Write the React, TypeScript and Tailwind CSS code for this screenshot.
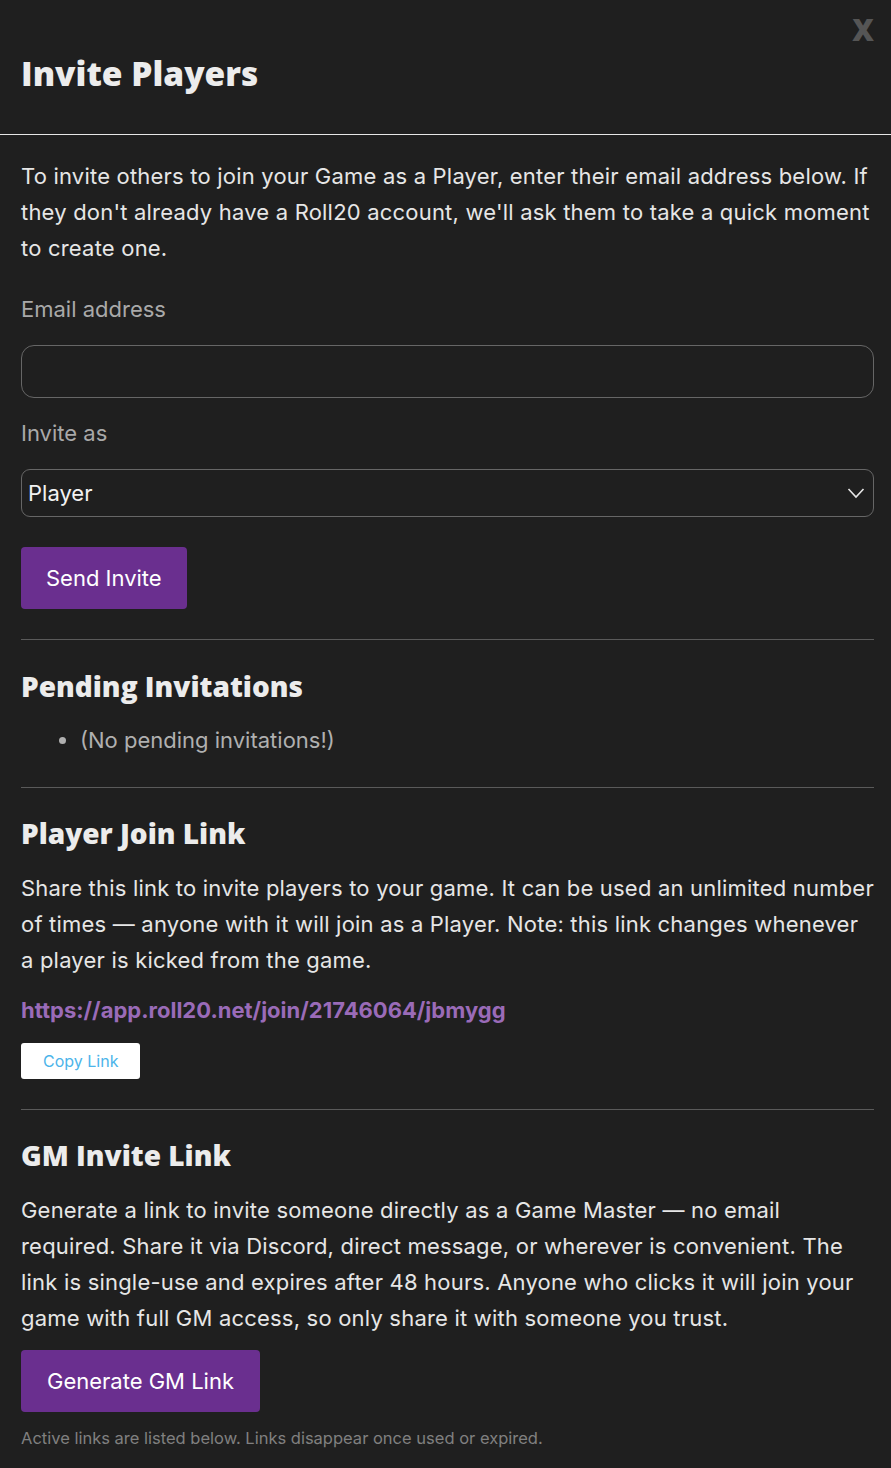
const body = { fontFamily: "Inter, 'Open Sans', sans-serif" };
const head = { fontFamily: "'Open Sans', 'Noto Sans', sans-serif" };

function Divider() {
  return <div className="h-px bg-[#5a5a5a]" />;
}

export default function App() {
  return (
    <div className="min-h-[1468px] bg-[#1f1f1f] text-[#e8e8e8]" style={body}>
      <div className="relative border-b border-[#e6e6e6] px-[21px] pt-[50px] pb-[38px]">
        <h1 className="text-[33.5px] font-extrabold leading-[46px] text-[#ececec]" style={head}>
          Invite Players
        </h1>
        <button className="absolute right-[17px] top-[12px] text-[30px] font-black leading-[36px] text-[#555]" style={head}>
          X
        </button>
      </div>

      <div className="pl-[21px] pr-[17px] pt-[23px]">
        <p className="text-[22px] leading-[36px] tracking-[0.2px] text-[#e6e6e6]">
          To invite others to join your Game as a Player, enter their email address below. If they don't already have a Roll20 account, we'll ask them to take a quick moment to create one.
        </p>

        <label className="mt-[28px] block text-[22px] leading-[30px] text-[#a9a9a9]">Email address</label>
        <input className="mt-[21px] block h-[53px] w-full rounded-[13px] border border-[#666] bg-transparent px-3 text-[22px] outline-none" />

        <label className="mt-[20px] block text-[22px] leading-[30px] text-[#a9a9a9]">Invite as</label>
        <div className="mt-[21px] flex h-[48px] items-center justify-between rounded-[9px] border border-[#666] pl-[6px] pr-[8px]">
          <span className="text-[22px] text-[#f2f2f2]">Player</span>
          <svg width="18" height="12" viewBox="0 0 18 12" fill="none" stroke="#e6e6e6" strokeWidth="1.6">
            <path d="M1.5 2l7.5 8 7.5-8" />
          </svg>
        </div>

        <button className="mt-[30px] h-[62px] rounded-[4px] bg-[#6a2f8f] px-[25px] text-[22px] text-white">
          Send Invite
        </button>

        <div className="mt-[30px]"><Divider /></div>

        <h2 className="mt-[27px] text-[28px] font-extrabold leading-[38px] text-[#ececec]" style={head}>
          Pending Invitations
        </h2>
        <ul className="mt-[20px] list-disc pl-[59px] text-[22px] leading-[30px] text-[#b0b0b0] marker:text-[#b0b0b0]">
          <li>(No pending invitations!)</li>
        </ul>

        <div className="mt-[32px]"><Divider /></div>

        <h2 className="mt-[26px] text-[28px] font-extrabold leading-[38px] text-[#ececec]" style={head}>
          Player Join Link
        </h2>
        <p className="mt-[18px] text-[22px] leading-[36px] tracking-[0.2px] text-[#e6e6e6]">
          Share this link to invite players to your game. It can be used an unlimited number of times — anyone with it will join as a Player. Note: this link changes whenever a player is kicked from the game.
        </p>
        <a className="mt-[17px] block text-[22px] font-bold leading-[30px] text-[#9a6bb8]">
          https://app.roll20.net/join/21746064/jbmygg
        </a>
        <button className="mt-[18px] h-[36px] rounded-[3px] bg-white px-[22px] text-[16px] text-[#4cb4ea]">
          Copy Link
        </button>

        <div className="mt-[30px]"><Divider /></div>

        <h2 className="mt-[26px] text-[28px] font-extrabold leading-[38px] text-[#ececec]" style={head}>
          GM Invite Link
        </h2>
        <p className="mt-[18px] text-[22px] leading-[36px] tracking-[0.2px] text-[#e6e6e6]">
          Generate a link to invite someone directly as a Game Master — no email required. Share it via Discord, direct message, or wherever is convenient. The link is single-use and expires after 48 hours. Anyone who clicks it will join your game with full GM access, so only share it with someone you trust.
        </p>
        <button className="mt-[14px] h-[62px] rounded-[4px] bg-[#6a2f8f] px-[26px] text-[22px] text-white">
          Generate GM Link
        </button>
        <p className="mt-[14px] text-[16.5px] leading-[24px] text-[#808080]">
          Active links are listed below. Links disappear once used or expired.
        </p>
      </div>
    </div>
  );
}
